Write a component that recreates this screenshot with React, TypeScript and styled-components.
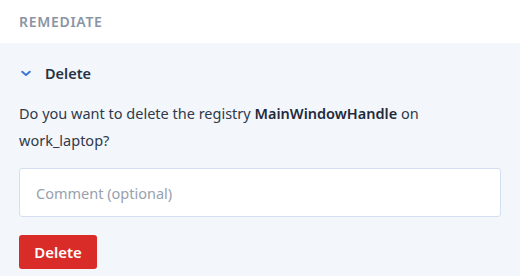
import React from "react";
import styled, { createGlobalStyle } from "styled-components";

const GlobalStyle = createGlobalStyle`
  body {
    margin: 0;
    background: #f3f6fb;
    font-family: "Noto Sans", "Open Sans", sans-serif;
  }
`

const Header = styled.div`
  height: 43px;
  background: #ffffff;
  display: flex;
  align-items: center;
  padding: 0 19px;
  font-size: 14px;
  font-weight: 600;
  letter-spacing: 0.7px;
  color: #8a94a3;
  text-transform: uppercase;
`

const Body = styled.div`
  display: flex;
  flex-direction: column;
  padding: 19px 19px 0 19px;
`

const SectionToggle = styled.button`
  display: flex;
  align-items: center;
  gap: 14px;
  padding: 0 0 0 2px;
  border: none;
  background: none;
  font-family: inherit;
  font-size: 14.5px;
  font-weight: 600;
  color: #263143;
  height: 22px;
  cursor: pointer;
  align-self: flex-start;
`

const Question = styled.p`
  margin: 16px 0 0 0;
  font-size: 14.5px;
  line-height: 27px;
  color: #2f3a4b;
  max-width: 440px;

  b {
    font-weight: 600;
    color: #1f2a3c;
  }
`

const CommentInput = styled.input`
  margin-top: 14px;
  height: 49px;
  box-sizing: border-box;
  width: 482px;
  border: 1px solid #d4e0f1;
  border-radius: 3px;
  background: #ffffff;
  padding: 0 16px;
  font-family: inherit;
  font-size: 14.5px;
  color: #2f3a4b;
  outline: none;

  &::placeholder {
    color: #98a1ae;
  }
`

const DangerButton = styled.button`
  margin-top: 18px;
  align-self: flex-start;
  height: 34px;
  width: 78px;
  border: none;
  border-radius: 3px;
  background: #d92b27;
  color: #ffffff;
  font-family: inherit;
  font-size: 15px;
  font-weight: 600;
  cursor: pointer;
`

const Chevron = () => (
  <svg width="10" height="7" viewBox="0 0 10 7">
    <path d="M1.2 1.8 L5 5 L8.8 1.8" fill="none" stroke="#3a78d4" strokeWidth="2" strokeLinecap="round" strokeLinejoin="round" />
  </svg>
)

const App = () => {
  return (
    <>
      <GlobalStyle />
      <Header>Remediate</Header>
      <Body>
        <SectionToggle>
          <Chevron />
          Delete
        </SectionToggle>
        <Question>
          Do you want to delete the registry <b>MainWindowHandle</b> on work_laptop?
        </Question>
        <CommentInput placeholder="Comment (optional)" />
        <DangerButton>Delete</DangerButton>
      </Body>
    </>
  )
}

export default App
